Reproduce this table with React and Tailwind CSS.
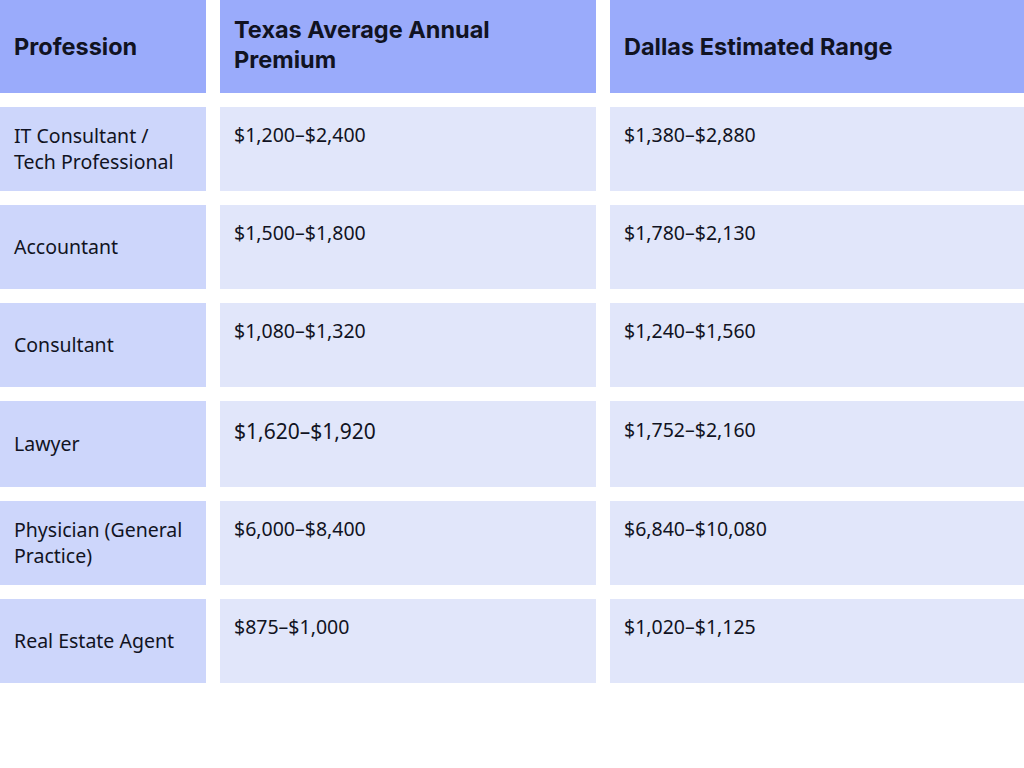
import React from "react";

const rows = [
  { name: "IT Consultant / Tech Professional", tx: "$1,200–$2,400", dal: "$1,380–$2,880" },
  { name: "Accountant", tx: "$1,500–$1,800", dal: "$1,780–$2,130" },
  { name: "Consultant", tx: "$1,080–$1,320", dal: "$1,240–$1,560" },
  { name: "Lawyer", tx: "$1,620–$1,920", dal: "$1,752–$2,160", big: true },
  { name: "Physician (General Practice)", tx: "$6,000–$8,400", dal: "$6,840–$10,080" },
  { name: "Real Estate Agent", tx: "$875–$1,000", dal: "$1,020–$1,125" },
];

const App = () => {
  return (
    <div
      className="w-[1024px] h-[768px] bg-white text-[#111322] flex flex-col gap-[14px]"
      style={{ fontFamily: "'Noto Sans', 'Open Sans', sans-serif" }}
    >
      <div
        className="grid grid-cols-[206px_376px_414px] gap-x-[14px] h-[93px] font-bold text-[23.5px] leading-[30px]"
        style={{ fontFamily: "Inter, 'Noto Sans', sans-serif" }}
      >
        <div className="bg-[#9aabfb] px-[14px] flex items-center">Profession</div>
        <div className="bg-[#9aabfb] px-[14px] flex items-center pb-[4px]">
          Texas Average Annual Premium
        </div>
        <div className="bg-[#9aabfb] px-[14px] flex items-center">Dallas Estimated Range</div>
      </div>
      {rows.map((row, i) => (
        <div
          key={i}
          className={
            "grid grid-cols-[206px_376px_414px] gap-x-[14px] text-[19.5px] leading-[26px] " +
            (row.big ? "h-[86px]" : "h-[84px]")
          }
        >
          <div className="bg-[#cdd6fb] px-[14px] flex items-center">{row.name}</div>
          <div className={"bg-[#e1e6fa] px-[14px] " + (row.big ? "text-[21px] pt-[17px]" : "pt-[15px]")}>
            {row.tx}
          </div>
          <div className={"bg-[#e1e6fa] px-[14px] " + (row.big ? "pt-[16px]" : "pt-[15px]")}>{row.dal}</div>
        </div>
      ))}
    </div>
  );
};

export default App;
